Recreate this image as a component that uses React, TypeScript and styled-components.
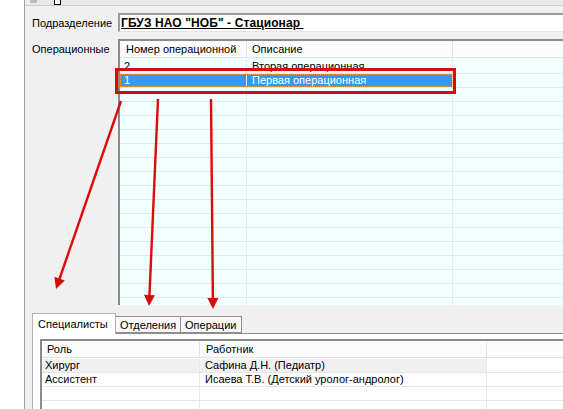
import React from "react";
import styled, { createGlobalStyle } from "styled-components";

const Global = createGlobalStyle`
  html, body { margin: 0; padding: 0; background: #ffffff; }
  * { box-sizing: border-box; }
`;

const Page = styled.div`
  position: relative;
  display: flex;
  width: 563px;
  height: 409px;
  overflow: hidden;
  font-family: "Liberation Sans", Arial, sans-serif;
  font-size: 11px;
  color: #000;
`;

const Gutter = styled.div`
  flex: none;
  width: 25px;
  background: #ffffff;
  border-right: 1px solid #a0a0a0;
`;

const Main = styled.div`
  flex: 1;
  min-width: 0;
  display: flex;
  flex-direction: column;
  background: #f0f0f0;
`;

const Toolbar = styled.div`
  flex: none;
  height: 6px;
  display: flex;
  align-items: flex-start;
  gap: 17px;
  padding-left: 5px;
  background: #e9e9e9;
  border-bottom: 1px solid #cdcdcd;
  overflow: hidden;
`;

const ToolIcon = styled.div<{ $boxed?: boolean }>`
  width: 7px;
  height: ${(p) => (p.$boxed ? "5px" : "3px")};
  background: ${(p) => (p.$boxed ? "#ffffff" : "#bdbdbd")};
  border: ${(p) => (p.$boxed ? "1px solid #000" : "none")};
  border-top: none;
`;

const Form = styled.div`
  flex: 1;
  min-height: 0;
  display: flex;
  flex-direction: column;
  padding: 7px 0 0 7px;
`;

const FieldRow = styled.div`
  display: flex;
  align-items: center;
  height: 19px;
`;

const Label = styled.div`
  flex: none;
  width: 86px;
  white-space: nowrap;
`;

const Field = styled.div`
  flex: 1;
  height: 19px;
  background: #fff;
  border-top: 2px solid #9a9a9a;
  border-left: 2px solid #9a9a9a;
  border-bottom: 1px solid #e3e3e3;
  padding: 1px 0 0 1px;
  font-size: 12px;
  font-weight: bold;
  letter-spacing: 0.1px;
  white-space: pre;
  line-height: 14px;
`;

const Underlined = styled.span`
  text-decoration: underline;
`;

const GridRow = styled.div`
  display: flex;
  align-items: flex-start;
  margin-top: 7px;
  height: 266px;
`;

const GridLabel = styled(Label)`
  padding-top: 4px;
`;

const Grid = styled.div<{ $bg: string }>`
  flex: 1;
  align-self: stretch;
  min-width: 0;
  overflow: hidden;
  background: ${(p) => p.$bg};
  border-top: 2px solid #8a8a8a;
  border-left: 2px solid #8a8a8a;
`;

const HeaderRow = styled.div`
  display: flex;
  height: 17px;
  background: #fcfcfc;
  border-bottom: 1px solid #e2e2e2;
`;

const HeadCell = styled.div<{ $w?: number; $pad: number }>`
  flex: ${(p) => (p.$w ? "none" : "1")};
  width: ${(p) => (p.$w ? `${p.$w}px` : "auto")};
  padding-left: ${(p) => p.$pad}px;
  line-height: 16px;
  border-right: ${(p) => (p.$w ? "1px solid #e2e2e2" : "none")};
  white-space: nowrap;
  overflow: hidden;
`;

const GridBody = styled.div<{ $lead: number }>`
  display: flex;
  flex-direction: column;
  padding-top: ${(p) => p.$lead}px;
`;

const BodyRow = styled.div`
  position: relative;
  display: flex;
  flex: none;
  height: 14px;
  border-bottom: 1px solid #e3e6e6;
`;

const Cell = styled.div<{ $w?: number; $pad: number; $bg?: string; $color?: string }>`
  flex: ${(p) => (p.$w ? "none" : "1")};
  width: ${(p) => (p.$w ? `${p.$w}px` : "auto")};
  padding-left: ${(p) => p.$pad}px;
  line-height: 13px;
  background: ${(p) => p.$bg ?? "transparent"};
  color: ${(p) => p.$color ?? "#000"};
  border-right: ${(p) => (p.$w ? "1px solid #e6eaea" : "none")};
  white-space: nowrap;
  overflow: hidden;
`;

const FocusRect = styled.div<{ $w: number }>`
  position: absolute;
  left: 0;
  top: 0;
  width: ${(p) => p.$w}px;
  height: 13px;
  border: 1px dotted #f0a050;
  pointer-events: none;
`;

const TabStrip = styled.div`
  display: flex;
  align-items: flex-end;
  height: 20px;
  margin-top: 8px;
  position: relative;
  z-index: 1;
`;

const Tab = styled.div<{ $w: number; $active?: boolean }>`
  width: ${(p) => p.$w}px;
  height: ${(p) => (p.$active ? 21 : 17)}px;
  margin-bottom: ${(p) => (p.$active ? -1 : 0)}px;
  background: ${(p) => (p.$active ? "#ffffff" : "#f7f7f7")};
  border: 1px solid ${(p) => (p.$active ? "#b4b4b4" : "#8e8e8e")};
  border-bottom: ${(p) => (p.$active ? "none" : "1px solid #8e8e8e")};
  border-left: ${(p) => (p.$active ? "1px solid #b4b4b4" : "none")};
  padding-left: ${(p) => (p.$active ? 5 : 4)}px;
  padding-top: ${(p) => (p.$active ? 3 : 1)}px;
  white-space: nowrap;
  line-height: 14px;
`;

const TabPanel = styled.div`
  flex: 1;
  min-height: 0;
  display: flex;
  flex-direction: column;
  background: #ffffff;
  border-top: 1px solid #8c8c8c;
  border-left: 1px solid #a9a9a9;
  padding: 5px 0 0 7px;
`;

const Overlay = styled.svg`
  position: absolute;
  left: 0;
  top: 0;
  pointer-events: none;
`;

const ops = [
  { num: "2", desc: "Вторая операционная", selected: false },
  { num: "1", desc: "Первая операционная", selected: true },
];

const staff = [
  { role: "Хирург", worker: "Сафина Д.Н. (Педиатр)", current: true },
  { role: "Ассистент", worker: "Исаева Т.В. (Детский уролог-андролог)", current: false },
];

const RED = "#dc0a0a";

function Arrow({ x1, y1, x2, y2 }: { x1: number; y1: number; x2: number; y2: number }) {
  const dx = x2 - x1;
  const dy = y2 - y1;
  const len = Math.hypot(dx, dy);
  const ux = dx / len;
  const uy = dy / len;
  const headL = 11;
  const headW = 5.5;
  const bx = x2 - ux * headL;
  const by = y2 - uy * headL;
  const px = -uy;
  const py = ux;
  const pts = `${x2},${y2} ${bx + px * headW},${by + py * headW} ${bx - px * headW},${by - py * headW}`;
  return (
    <g>
      <line x1={x1} y1={y1} x2={bx + ux * 2} y2={by + uy * 2} stroke={RED} strokeWidth={2.4} />
      <polygon points={pts} fill={RED} />
    </g>
  );
}

export default function App() {
  const emptyTop = Array.from({ length: 18 });
  const emptyBottom = Array.from({ length: 4 });
  return (
    <>
      <Global />
      <Page>
        <Gutter />
        <Main>
          <Toolbar>
            <ToolIcon />
            <ToolIcon $boxed />
          </Toolbar>
          <Form>
            <FieldRow>
              <Label>Подразделение</Label>
              <Field>
                <Underlined>ГБУЗ НАО "НОБ" - Стационар </Underlined>
              </Field>
            </FieldRow>
            <GridRow>
              <GridLabel>Операционные</GridLabel>
              <Grid $bg="#f0ffff">
                <HeaderRow>
                  <HeadCell $w={127} $pad={6}>Номер операционной</HeadCell>
                  <HeadCell $w={206} $pad={5}>Описание</HeadCell>
                  <HeadCell $pad={0} />
                </HeaderRow>
                <GridBody $lead={2}>
                  {ops.map((r) => (
                    <BodyRow key={r.num}>
                      <Cell $w={127} $pad={4} $bg={r.selected ? "#3399ff" : undefined} $color={r.selected ? "#fff" : undefined}>
                        {r.num}
                      </Cell>
                      <Cell $w={206} $pad={5} $bg={r.selected ? "#3399ff" : undefined} $color={r.selected ? "#fff" : undefined}>
                        {r.desc}
                      </Cell>
                      <Cell $pad={0} />
                      {r.selected && <FocusRect $w={333} />}
                    </BodyRow>
                  ))}
                  {emptyTop.map((_, i) => (
                    <BodyRow key={`e${i}`}>
                      <Cell $w={127} $pad={4} />
                      <Cell $w={206} $pad={5} />
                      <Cell $pad={0} />
                    </BodyRow>
                  ))}
                </GridBody>
              </Grid>
            </GridRow>
            <TabStrip>
              <Tab $w={84} $active>Специалисты</Tab>
              <Tab $w={65}>Отделения</Tab>
              <Tab $w={61}>Операции</Tab>
            </TabStrip>
            <TabPanel>
              <Grid $bg="#ffffff">
                <HeaderRow>
                  <HeadCell $w={158} $pad={5}>Роль</HeadCell>
                  <HeadCell $w={287} $pad={6}>Работник</HeadCell>
                  <HeadCell $pad={0} />
                </HeaderRow>
                <GridBody $lead={1}>
                  {staff.map((s) => (
                    <BodyRow key={s.role}>
                      <Cell $w={158} $pad={3} $bg={s.current ? "#f0f0f0" : undefined}>{s.role}</Cell>
                      <Cell $w={287} $pad={5} $bg={s.current ? "#f0f0f0" : undefined}>{s.worker}</Cell>
                      <Cell $pad={0} />
                    </BodyRow>
                  ))}
                  {emptyBottom.map((_, i) => (
                    <BodyRow key={`b${i}`}>
                      <Cell $w={158} $pad={3} />
                      <Cell $w={287} $pad={5} />
                      <Cell $pad={0} />
                    </BodyRow>
                  ))}
                </GridBody>
              </Grid>
            </TabPanel>
          </Form>
        </Main>
        <Overlay width={563} height={409} viewBox="0 0 563 409">
          <rect x={116.5} y={69.5} width={338} height={23} fill="none" stroke={RED} strokeWidth={3} />
          <Arrow x1={121} y1={101} x2={56} y2={289} />
          <Arrow x1={158} y1={99} x2={149} y2={306} />
          <Arrow x1={211} y1={99} x2={213} y2={309} />
        </Overlay>
      </Page>
    </>
  );
}
